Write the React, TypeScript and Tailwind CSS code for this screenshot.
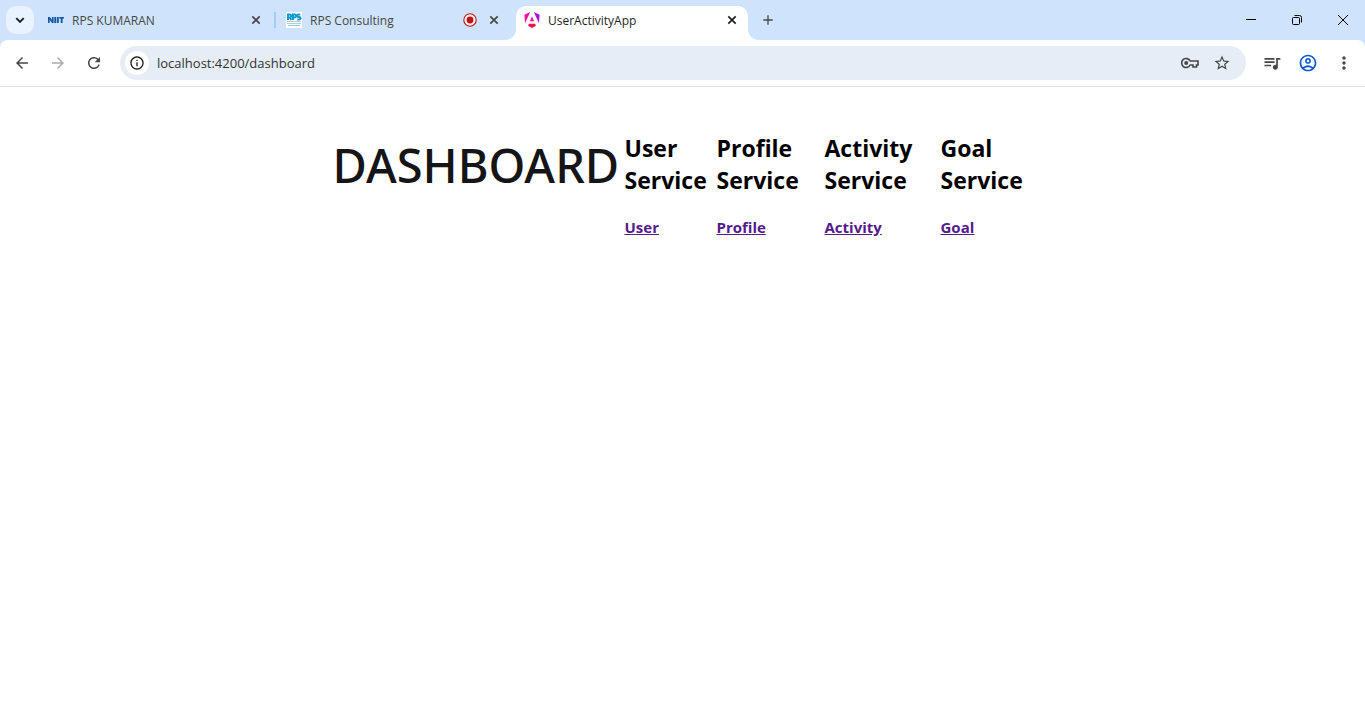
import type { ReactNode } from "react";
import {
  MdAdd,
  MdArrowBack,
  MdArrowForward,
  MdInfoOutline,
  MdMoreVert,
  MdOutlineAccountCircle,
  MdQueueMusic,
  MdRefresh,
  MdStarOutline,
} from "react-icons/md";

function NiitLogo() {
  return (
    <svg viewBox="0 0 16 16" className="size-4 shrink-0" aria-hidden="true">
      <g fill="#1257a8">
        <path d="M0 5h2l2 3V5h1.600v6H4L1.600 7.800V11H0z" />
        <path d="M6.300 5h1.900v6H6.300zM8.900 5h1.900v6H8.900z" />
        <path d="M11.200 5H16v1.600h-1.400V11h-1.900V6.600h-1.500z" />
      </g>
    </svg>
  );
}

function RpsLogo() {
  return (
    <svg viewBox="0 0 16 16" className="size-4 shrink-0" aria-hidden="true">
      <rect width="16" height="16" fill="#fff" />
      <g fill="none" stroke="#0d9bd0" strokeWidth="2">
        <path d="M2 8V2.500h1.800a1.400 1.400 0 0 1 0 2.900H2M4 5.400L5.400 8" />
        <path d="M7 8V2.500h1.700a1.400 1.400 0 0 1 0 2.900H7" />
        <path d="M14.300 2.600h-1.800a1.200 1.200 0 0 0 0 2.500h.8a1.200 1.200 0 0 1 0 2.400h-2" />
      </g>
      <path d="M1 9.500h14M1 11.500h14" stroke="#c3c8cb" strokeWidth="1" />
      <path d="M2 13.500h12" stroke="#8fcde6" strokeWidth="1" />
    </svg>
  );
}

function AngularLogo() {
  return (
    <svg viewBox="0 0 24 24" className="size-4 shrink-0" aria-hidden="true">
      <defs>
        <linearGradient id="ng" x1="0" y1="0.600" x2="1" y2="0.300">
          <stop offset="0" stopColor="#fb0a9c" />
          <stop offset="0.500" stopColor="#f00bc0" />
          <stop offset="1" stopColor="#8514f5" />
        </linearGradient>
      </defs>
      <path
        fill="url(#ng)"
        d="M14.692 0l7.832 16.855.814-12.856L14.692 0ZM9.308 0 .662 3.999l.814 12.856L9.308 0Zm-.405 13.930h6.198L12 6.396 8.903 13.930Z"
      />
      <path fill="#fb0a4c" d="M16.712 17.711H7.288l-1.204 2.916L12 24l5.916-3.373-1.204-2.916Z" />
    </svg>
  );
}

function RecordingIcon() {
  return (
    <svg viewBox="0 0 14 14" className="mr-px size-3.5 shrink-0" aria-label="Recording">
      <circle cx="7" cy="7" r="6.200" fill="#fff" fillOpacity="0.600" stroke="#c5110f" strokeWidth="1.100" />
      <circle cx="7" cy="7" r="3.400" fill="#c5110f" />
    </svg>
  );
}

function KeyIcon() {
  return (
    <svg viewBox="0 0 18 12" className="h-3 w-[18px]" fill="none" stroke="#474747" strokeWidth="1.600" aria-hidden="true">
      <path d="M9.200 4A4.500 4.500 0 1 0 9.200 8H12v2h3.500V8H17V4z" />
      <circle cx="5.200" cy="6" r="2" fill="#474747" stroke="none" />
    </svg>
  );
}

type TabProps = { icon: ReactNode; title: string; active?: boolean; recording?: boolean };

function Tab({ icon, title, active, recording }: TabProps) {
  return (
    <div
      className={
        active
          ? "relative flex h-[34px] w-[232px] items-center gap-2 rounded-t-[10px] bg-white pl-2 pr-2 pb-1.5 text-[#1f1f1f]"
          : "flex h-[34px] w-[232px] items-center gap-2 pl-2 pr-2 pb-1.5 text-[#474747]"
      }
    >
      {active && (
        <>
          <span className="absolute bottom-0 -left-2.5 size-2.5 bg-[radial-gradient(circle_at_0_0,#cfe4fc_9.5px,#fff_10px)]" />
          <span className="absolute bottom-0 -right-2.5 size-2.5 bg-[radial-gradient(circle_at_100%_0,#cfe4fc_9.5px,#fff_10px)]" />
        </>
      )}
      {icon}
      <span className="flex-1 truncate pt-0.5 text-xs">{title}</span>
      {recording && <RecordingIcon />}
      <button type="button" aria-label={`Close ${title}`} className="flex size-4 items-center justify-center">
        <svg viewBox="0 0 16 16" className="size-4" stroke="currentColor" strokeWidth="1.700" aria-hidden="true">
          <path d="M4.300 4.300l7.400 7.400M11.700 4.300l-7.400 7.400" />
        </svg>
      </button>
    </div>
  );
}

function ToolButton({ label, children }: { label: string; children: ReactNode }) {
  return (
    <button type="button" aria-label={label} className="flex h-9 w-9 items-center justify-center text-[#474747]">
      {children}
    </button>
  );
}

function TabStrip() {
  return (
    <header className="flex h-10 items-end bg-[#cfe4fc]">
      <button
        type="button"
        aria-label="Search tabs"
        className="mx-1.5 mb-1.5 flex size-7 items-center justify-center rounded-[10px] bg-[#e9f2ff] text-[#1f1f1f]"
      >
        <svg viewBox="0 0 16 16" className="size-4" fill="none" stroke="currentColor" strokeWidth="1.900" aria-hidden="true">
          <path d="M4.300 6.200L8 9.900l3.700-3.700" />
        </svg>
      </button>
      <Tab icon={<NiitLogo />} title="RPS KUMARAN" />
      <span className="mx-0.5 mb-3 h-4 w-0.5 bg-[#a4cbfa]" />
      <Tab icon={<RpsLogo />} title="RPS Consulting" recording />
      <span className="w-1.5" />
      <Tab icon={<AngularLogo />} title="UserActivityApp" active />
      <button type="button" aria-label="New tab" className="mb-1.5 ml-1.5 flex size-7 items-center justify-center text-[#474747]">
        <MdAdd className="size-4" />
      </button>
      <div className="ml-auto flex h-10 text-black">
        <button type="button" aria-label="Minimize" className="flex w-[46px] items-center justify-center">
          <svg viewBox="0 0 10 10" className="size-2.5" stroke="currentColor">
            <path d="M0 4.500h10" />
          </svg>
        </button>
        <button type="button" aria-label="Restore" className="flex w-[46px] items-center justify-center">
          <svg viewBox="0 0 10 10" className="size-2.5" fill="none" stroke="currentColor">
            <rect x="0.500" y="2.500" width="7" height="7" rx="1" />
            <path d="M2.500 .5h5a2 2 0 0 1 2 2v5" />
          </svg>
        </button>
        <button type="button" aria-label="Close window" className="flex w-[45px] items-center justify-center">
          <svg viewBox="0 0 10 10" className="size-2.5" stroke="currentColor">
            <path d="M0 0l10 10M10 0L0 10" />
          </svg>
        </button>
      </div>
    </header>
  );
}

function Toolbar() {
  return (
    <div className="bg-[#cfe4fc]">
      <div className="flex h-[47px] items-center rounded-t-lg border-b border-[#e0e0e0] bg-white pl-1 pr-[3px]">
        <ToolButton label="Back"><MdArrowBack className="size-[18px]" /></ToolButton>
        <button type="button" disabled aria-label="Forward" className="flex h-9 w-9 items-center justify-center text-[#ababab]">
          <MdArrowForward className="size-[18px]" />
        </button>
        <ToolButton label="Reload"><MdRefresh className="size-[18px]" /></ToolButton>
        <div className="mx-2 flex h-[34px] flex-1 items-center rounded-full bg-[#e6edf6] pl-[5px] pr-2">
          <button type="button" aria-label="View site information" className="mr-2 flex size-6 items-center justify-center rounded-full bg-white text-[#1f1f1f]">
            <MdInfoOutline className="size-4" />
          </button>
          <label className="flex flex-1 items-center">
            <input
              type="text"
              aria-label="Address"
              defaultValue="localhost:4200/dashboard"
              className="h-7 w-full bg-transparent text-[13px] leading-7 text-[#333] outline-none"
            />
          </label>
          <button type="button" aria-label="Passwords" className="flex w-8 items-center justify-center"><KeyIcon /></button>
          <button type="button" aria-label="Bookmark" className="flex w-8 items-center justify-center text-[#474747]">
            <MdStarOutline className="size-[18px]" />
          </button>
        </div>
        <ToolButton label="Media controls"><MdQueueMusic className="size-5" /></ToolButton>
        <button type="button" aria-label="Profile" className="flex h-9 w-9 items-center justify-center text-[#0b57d0]">
          <MdOutlineAccountCircle className="size-5" />
        </button>
        <ToolButton label="Menu"><MdMoreVert className="size-5" /></ToolButton>
      </div>
    </div>
  );
}

const services = [
  { name: "User", width: "w-[92px]" },
  { name: "Profile", width: "w-[108px]" },
  { name: "Activity", width: "w-[116px]" },
  { name: "Goal", width: "w-[92px]" },
];

export default function App() {
  return (
    <div className="min-h-screen bg-white font-['Open_Sans','Noto_Sans',sans-serif]">
      <TabStrip />
      <Toolbar />
      <main className="mx-auto flex max-w-[700px] items-start pt-[45px]">
        <h1 className="mt-2 w-[292px] shrink-0 font-['Noto_Sans','Open_Sans',sans-serif] text-[47px] leading-[50px] font-medium text-[#151417]">
          DASHBOARD
        </h1>
        {services.map((s) => (
          <section key={s.name} className={`${s.width} shrink-0`}>
            <h2 className="w-min text-[23px] leading-8 font-bold text-black">{s.name} Service</h2>
            <a href={`/${s.name.toLowerCase()}`} className="mt-[19px] inline-block text-[15px] leading-6 font-bold text-[#551a8b] underline">
              {s.name}
            </a>
          </section>
        ))}
      </main>
    </div>
  );
}
